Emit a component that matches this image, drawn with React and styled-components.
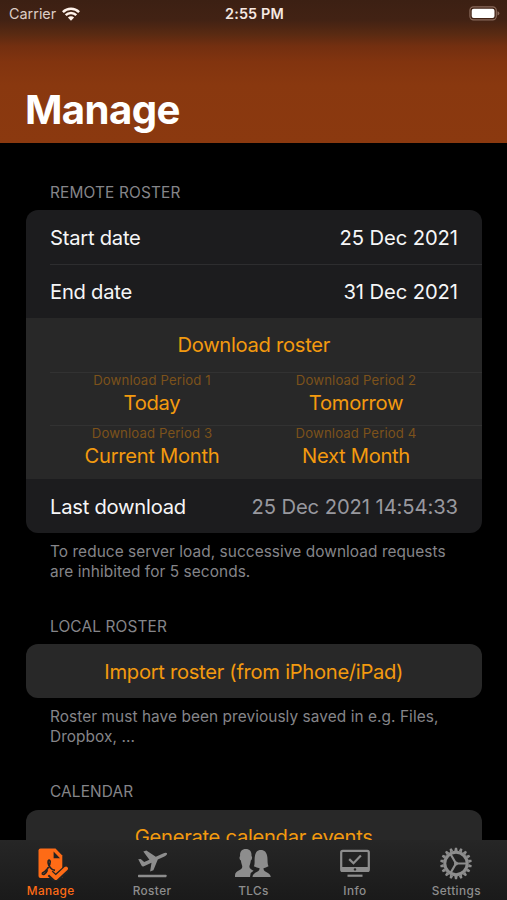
import styled, { createGlobalStyle } from 'styled-components'

const GlobalStyle = createGlobalStyle`
    * {
        box-sizing: border-box;
    }
    body {
        margin: 0;
        background: #000;
        font-family: Inter, "Liberation Sans", sans-serif;
    }
`;

const tabs = [
    { name: 'Manage', icon: ManageIcon, active: true },
    { name: 'Roster', icon: RosterIcon },
    { name: 'TLCs', icon: PeopleIcon },
    { name: 'Info', icon: InfoIcon },
    { name: 'Settings', icon: GearIcon },
]

function WifiIcon() {
    return (
        <svg width="18" height="14" viewBox="0 0 18 14" fill="none" stroke="#fff3eb" strokeWidth="2.5">
            <path d="M0.9 5.1A11.6 11.6 0 0 1 17.1 5.1" />
            <path d="M3.7 8.1A7.6 7.6 0 0 1 14.3 8.1" />
            <path d="M9 13.8L5.9 10.6A4.4 4.4 0 0 1 12.1 10.6Z" fill="#fff3eb" stroke="none" />
        </svg>
    )
}

function BatteryIcon() {
    return (
        <svg width="31" height="15" viewBox="0 0 31 15">
            <rect x="0.9" y="0.9" width="26.4" height="13" rx="3.6" fill="none" stroke="#8a6a5c" strokeWidth="1.1" />
            <rect x="2.7" y="2.7" width="22.8" height="9.4" rx="2" fill="#fff" />
            <path d="M28.5 5.2Q30.4 5.8 30.4 7.4T28.5 9.6Z" fill="#8a6a5c" />
        </svg>
    )
}

function ManageIcon() {
    return (
        <svg width="34" height="34" viewBox="0 0 34 34">
            <path d="M6.5 1.5H21.5L28.3 8.5V31H6.5Q4.5 31 4.5 29V3.5Q4.5 1.5 6.5 1.5Z" fill="#fe6b16" />
            <path d="M19.6 4.5V11.2H26Z" fill="#232323" />
            <path d="M8 26.2C11.5 24.8 16.4 19.5 16.2 14.9C16 12.2 13.7 12.6 14.1 15.8C14.6 19.3 17.4 22.8 21 23.4" fill="none" stroke="#232323" strokeWidth="1.7" />
            <path d="M7.8 26.4C9.2 28.6 11.8 27 13.4 23.2" fill="none" stroke="#232323" strokeWidth="1.7" />
            <path d="M16.2 26.4L21.6 31.6L32.6 21.7" fill="none" stroke="#232323" strokeWidth="7.4" />
            <path d="M16.6 26.2L21.8 31L32 21.5" fill="none" stroke="#fe6b16" strokeWidth="4" strokeLinecap="round" strokeLinejoin="round" />
        </svg>
    )
}

function RosterIcon() {
    return (
        <svg width="34" height="34" viewBox="0 0 34 34" fill="#8d8d8d">
            <path d="M3.2 12.3L5.7 12L9.2 15L14.4 12.7L8.3 4.6L11.4 3.5L20.8 9.8L27.5 6.7C29.8 5.6 31.5 5.2 32 6.2C32.5 7.4 31 8.7 28.9 9.7L22.8 12.6L18.4 23.3L15.1 24.6L16.5 15.7L8.9 19.2C7.8 19.7 7.1 19.4 6.5 18.5Z" />
            <rect x="3" y="27.7" width="28.5" height="2.5" rx="0.6" />
        </svg>
    )
}

function PeopleIcon() {
    return (
        <svg width="38" height="34" viewBox="0 0 38 34" fill="#8d8d8d">
            <path d="M6.1 9C5.7 4.5 8 2 11.8 2S17.9 4.5 17.5 9C18.7 10 18 12.8 16.8 13.6C16.5 16.8 15.7 17.9 15.4 19.5C15.4 21.7 17.7 22.8 19.6 23.7L16.7 26.1L16 30H1V28.2C1.3 23 8.3 23.6 8.3 19.8C8.1 18 7.2 16.4 6.9 13.6C5.5 12.8 5 10.1 6.1 9Z" />
            <path d="M18.5 30C18.5 24.8 25.7 25.9 25.6 21.2Q22.7 21 19.9 19.3C21 17.2 20.4 13.7 20.7 10.4C21.2 5.5 23.1 3 26.8 3S33 5.5 33.4 10.4C33.7 14 33.3 16.7 34.5 19.3Q31.8 21 29.5 21.2C29.3 25.9 36.5 24.8 36.8 30Z" />
        </svg>
    )
}

function InfoIcon() {
    return (
        <svg width="34" height="34" viewBox="0 0 34 34">
            <rect x="3.2" y="3.9" width="27.6" height="20" rx="1.5" fill="none" stroke="#8d8d8d" strokeWidth="2.2" />
            <rect x="3" y="20" width="28" height="4.7" fill="#8d8d8d" />
            <circle cx="17" cy="22.4" r="1.2" fill="#252525" />
            <path d="M11.2 12.1L15.5 16.2L22.9 8.4" fill="none" stroke="#8d8d8d" strokeWidth="2.2" />
            <rect x="9.5" y="27.6" width="15" height="2.2" fill="#8d8d8d" />
        </svg>
    )
}

function GearIcon() {
    const teeth = Array.from({ length: 18 }, (_, i) => i * 20)
    return (
        <svg width="34" height="34" viewBox="0 0 34 34" fill="#8d8d8d">
            {teeth.map((deg) => (
                <path key={deg} d="M15.3 4.5L15.9 1.2H18.1L18.7 4.5Z" transform={`translate(0 -0.5) rotate(${deg} 17 17)`} />
            ))}
            <circle cx="17" cy="16.5" r="11.2" fill="none" stroke="#8d8d8d" strokeWidth="3" />
            <path d="M17 16.5L11.5 7M17 16.5H28M17 16.5L11.5 26" stroke="#8d8d8d" strokeWidth="2.2" />
            <circle cx="17" cy="16.5" r="2" />
        </svg>
    )
}

function App() {
    return (
        <Phone>
            <GlobalStyle />
            <Header>
                <StatusBar>
                    <Carrier>Carrier <WifiIcon /></Carrier>
                    <Time>2:55 PM</Time>
                    <Battery><BatteryIcon /></Battery>
                </StatusBar>
                <Title>Manage</Title>
            </Header>

            <Content>
                <SectionTitle>REMOTE ROSTER</SectionTitle>
                <Card>
                    <Row>
                        <Label>Start date</Label>
                        <Value>25 Dec 2021</Value>
                    </Row>
                    <Row $line>
                        <Label>End date</Label>
                        <Value>31 Dec 2021</Value>
                    </Row>
                    <ButtonRow>
                        <Action>Download roster</Action>
                    </ButtonRow>
                    <PeriodRow>
                        <Period>
                            <PeriodName>Download Period 1</PeriodName>
                            <Action>Today</Action>
                        </Period>
                        <Period>
                            <PeriodName>Download Period 2</PeriodName>
                            <Action>Tomorrow</Action>
                        </Period>
                    </PeriodRow>
                    <PeriodRow>
                        <Period>
                            <PeriodName>Download Period 3</PeriodName>
                            <Action>Current Month</Action>
                        </Period>
                        <Period>
                            <PeriodName>Download Period 4</PeriodName>
                            <Action>Next Month</Action>
                        </Period>
                    </PeriodRow>
                    <Row>
                        <Label>Last download</Label>
                        <Value $muted>25 Dec 2021 14:54:33</Value>
                    </Row>
                </Card>
                <Note>To reduce server load, successive download requests<br />are inhibited for 5 seconds.</Note>

                <SectionTitle>LOCAL ROSTER</SectionTitle>
                <Card>
                    <ButtonRow>
                        <Action>Import roster (from iPhone/iPad)</Action>
                    </ButtonRow>
                </Card>
                <Note>Roster must have been previously saved in e.g. Files,<br />Dropbox, ...</Note>

                <SectionTitle>CALENDAR</SectionTitle>
                <Card>
                    <ButtonRow>
                        <Action>Generate calendar events</Action>
                    </ButtonRow>
                </Card>
            </Content>

            <TabBar>
                {tabs.map((tab) => {
                    const Icon = tab.icon
                    return (
                        <Tab key={tab.name} $active={tab.active}>
                            <Icon />
                            <span>{tab.name}</span>
                        </Tab>
                    )
                })}
            </TabBar>
        </Phone>
    );
}

const Phone = styled.div`
display: flex;
flex-direction: column;
width: 507px;
height: 900px;
overflow: hidden;
background: #000;
`;

const Header = styled.header`
flex: none;
display: flex;
flex-direction: column;
justify-content: space-between;
height: 142.5px;
background: linear-gradient(#3c2013 0, #422214 20px, #592a12 34px, #732f10 46px, #82340f 62px, #89380f 85px, #8b390f 100%);
`;

const StatusBar = styled.div`
display: grid;
grid-template-columns: 1fr auto 1fr;
align-items: center;
height: 27px;
padding: 0 7px 0 9px;
color: #f6e9e2;
font-size: 14.4px;
`;

const Carrier = styled.div`
display: flex;
align-items: center;
gap: 6px;
color: #dccdc5;
letter-spacing: 0;
`;

const Time = styled.div`
font-weight: 600;
letter-spacing: 0.15px;
`;

const Battery = styled.div`
display: flex;
justify-content: flex-end;
`;

const Title = styled.h1`
margin: 0;
padding: 0 25px 8px;
color: #fff;
font-size: 40.2px;
line-height: 50px;
font-weight: 700;
letter-spacing: -0.6px;
`;

const Content = styled.main`
flex: 1;
min-height: 0;
overflow: hidden;
padding: 40px 25px 0 25.5px;
`;

const SectionTitle = styled.h2`
margin: 0;
padding-left: 24.5px;
height: 27.7px;
color: #858589;
font-size: 15.4px;
line-height: 20px;
font-weight: 400;
letter-spacing: 0.15px;
`;

const Card = styled.section`
border-radius: 12px;
overflow: hidden;
background: #1c1c1e;
`;

const Row = styled.div`
display: flex;
align-items: center;
justify-content: space-between;
height: 53.8px;
padding: 1px 24px 0 0;
margin-left: 24.5px;
border-top: ${(props) => props.$line ? '1px solid #2d2d2f' : 'none'};
font-size: 20.2px;
`;

const Label = styled.span`
color: #f6f6f7;
letter-spacing: -0.25px;
`;

const Value = styled.span`
color: ${(props) => props.$muted ? '#98989e' : '#f6f6f7'};
letter-spacing: -0.08px;
`;

const ButtonRow = styled.div`
display: flex;
align-items: center;
justify-content: center;
height: 53.8px;
padding-top: 1px;
background: #282828;
`;

const Action = styled.button`
border: none;
padding: 0;
background: none;
color: #f39a0f;
font-family: inherit;
font-size: 20.2px;
line-height: 28px;
letter-spacing: -0.3px;
`;

const PeriodRow = styled.div`
display: grid;
grid-template-columns: 1fr 1fr;
height: 53.8px;
padding: 0 24px 0 24.5px;
background: linear-gradient(#323232, #323232) 24.5px 0 / 100% 1px no-repeat #282828;
`;

const Period = styled.div`
display: flex;
flex-direction: column;
align-items: center;
`;

const PeriodName = styled.span`
color: #7c521b;
font-size: 13.2px;
line-height: 17px;
letter-spacing: 0.12px;
`;

const Note = styled.p`
margin: 0;
padding: 9px 0 0 24.5px;
height: 83.8px;
color: #858589;
font-size: 15.4px;
line-height: 19.6px;
letter-spacing: 0.07px;
white-space: nowrap;
`;

const TabBar = styled.nav`
flex: none;
display: grid;
grid-template-columns: repeat(5, 1fr);
height: 60px;
background: linear-gradient(#262626, #1a1a1a);
`;

const Tab = styled.div`
display: flex;
flex-direction: column;
align-items: center;
padding-top: 7px;
color: ${(props) => props.$active ? '#fe6b16' : '#8d8d8d'};
font-size: 11.8px;
line-height: 20px;
font-weight: 500;
letter-spacing: 0.4px;
svg {
    flex: none;
    display: block;
}
`;

export default App;
